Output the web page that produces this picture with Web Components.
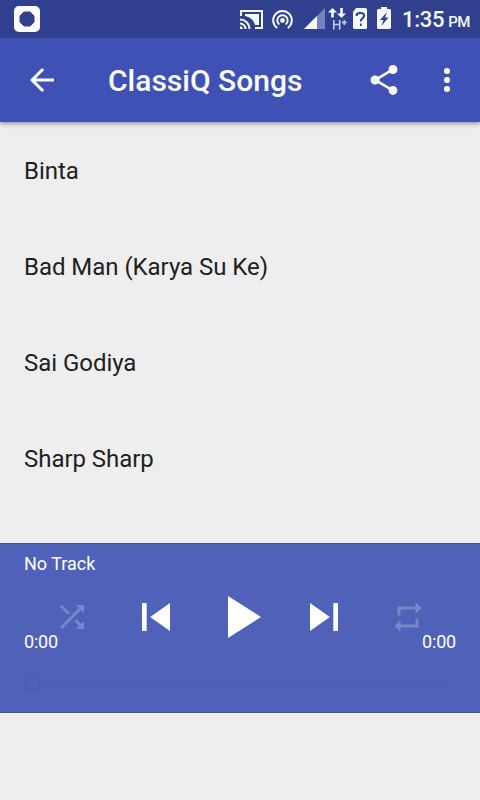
<!DOCTYPE html>
<html lang="en">
<head>
<meta charset="utf-8">
<title>ClassiQ Songs</title>
<style>
html,body{margin:0;height:100%}
body{width:480px;height:800px;overflow:hidden;background:#eee;font-family:Roboto,"Liberation Sans",sans-serif}
</style>
</head>
<body>
<music-app></music-app>
<script>
function define(name, html) {
  customElements.define(name, class extends HTMLElement {
    constructor() {
      super();
      this.attachShadow({mode: 'open'}).innerHTML = html;
    }
  });
}

define('status-bar', `
<style>
:host{position:relative;z-index:1;display:flex;align-items:center;box-sizing:border-box;height:38px;padding:0 0 0 14px;background:#30408f;color:#f4f8ff}
svg{display:block;flex:none}
.gap{width:200px}
.time{font-size:22px;line-height:36px;white-space:nowrap;margin-left:10px;padding-top:3px;font-weight:500;letter-spacing:-.3px}
small{font-size:15px;margin-left:4px;font-weight:500;letter-spacing:-.5px}
</style>
<svg width="26" height="26" viewBox="0 0 26 26"><rect width="26" height="26" rx="5" fill="#fff"/><path d="M10 6h6l4 4v6l-4 4h-6l-4-4v-6z" fill="#30408f" stroke="#30408f" stroke-linejoin="round"/></svg>
<span class="gap"></span>
<svg width="120" height="26" viewBox="240 6 120 26" fill="none" stroke="#f4f8ff" stroke-width="2">
  <path d="M241 16v-5h21v17h-7"/>
  <path d="M245 14h14v11h-4c-1-5-5-8-10-9z" fill="#f4f8ff" stroke="none"/>
  <path d="M240 19.5a9.500 9.500 0 0 1 9.500 9.500M240 23.500a5.500 5.500 0 0 1 5.500 5.500"/>
  <path d="M240 26.200a2.800 2.800 0 0 1 2.800 2.800h-2.800z" fill="#f4f8ff" stroke="none"/>
  <path d="M277.200 28a9.300 9.300 0 1 1 10.600 0M279.400 24.500a5.200 5.200 0 1 1 6.200 0"/>
  <circle cx="282.500" cy="20.500" r="2.400" fill="#f4f8ff" stroke="none"/>
  <path d="M325 8v21h-21z" fill="#7282c0" stroke="none"/>
  <path d="M317 16v13h-13z" fill="#f4f8ff" stroke="none"/>
  <path d="M332.500 17.500v-7M341.500 8v7" stroke-width="2.600"/>
  <path d="M328 12.500l4.500-4.500 4.500 4.500zM337 13.500l4.500 4.500 4.500-4.500z" fill="#f4f8ff" stroke="none"/>
  <path d="M333.800 20v9.500M339.700 20v9.500M333.800 24.500h5.900M341.800 22.500h5M344.300 20v5" stroke="#bdcbf4" stroke-width="1.600"/>
  <path d="M356 8h4v21h-5.500q-1.500 0-1.500-1.500V12z" fill="#f4f8ff" stroke="none"/>
  <path d="M356.500 16c0-2 1.500-3 3.500-3" stroke="#30408f"/>
</svg>
<svg width="32" height="26" viewBox="360 6 32 26" fill="#f4f8ff">
  <path d="M360 8h5.500q1.500 0 1.500 1.500v18q0 1.500-1.500 1.500H360z"/>
  <path d="M360 13c3-.3 4.500 1 4 3.200-.5 2-3.300 2.300-3.300 5.300" fill="none" stroke="#30408f" stroke-width="2"/>
  <path d="M360 23.500h1.700v2.500H360z" fill="#30408f"/>
  <path d="M381 7h6v2h2.500q1.500 0 1.500 1.500v17q0 1.500-1.500 1.500h-11q-1.500 0-1.500-1.500v-17Q377 9 378.500 9h2.500z"/>
  <path d="M387 12l-7 8h3.500l-2 6 7-8.500H385z" fill="#30408f"/>
</svg>
<span class="time">1:35<small>PM</small></span>`);

define('app-bar', `
<style>
:host{position:relative;display:flex;align-items:center;box-sizing:border-box;height:84px;padding:0 15px 0 24px;background:#3f51b5;box-shadow:0 1px 5px rgba(0,0,0,.5);color:#f8fcff}
svg{display:block;width:36px;height:36px;fill:currentColor}
h1{flex:1;margin:0 0 0 48px;padding-top:2px;font-size:30px;line-height:40px;font-weight:500;white-space:nowrap}
.more{margin-left:27px}
</style>
<svg viewBox="0 0 24 24"><path d="M20 11H7.830l5.590-5.590L12 4l-8 8 8 8 1.410-1.410L7.830 13H20v-2z"/></svg>
<h1><slot></slot></h1>
<svg viewBox="0 0 24 24"><path d="M18 16.080c-.76 0-1.440.3-1.960.77L8.910 12.700c.05-.23.09-.46.09-.7s-.04-.47-.09-.7l7.050-4.110c.54.5 1.250.81 2.040.81 1.660 0 3-1.340 3-3s-1.340-3-3-3-3 1.340-3 3c0 .24.04.47.09.7L8.040 9.810C7.500 9.310 6.790 9 6 9c-1.660 0-3 1.340-3 3s1.340 3 3 3c.79 0 1.500-.31 2.040-.81l7.120 4.160c-.05.21-.08.43-.08.65 0 1.610 1.310 2.920 2.920 2.920s2.920-1.310 2.920-2.920-1.310-2.920-2.920-2.920z"/></svg>
<svg class="more" viewBox="0 0 24 24"><circle cx="12" cy="6" r="2"/><circle cx="12" cy="12" r="2"/><circle cx="12" cy="18" r="2"/></svg>`);

define('song-item', `
<style>:host{display:flex;align-items:center;box-sizing:border-box;height:96px;padding:2px 24px 0;font-size:24px;line-height:32px;letter-spacing:-.04px;color:#212121}</style>
<slot></slot>`);

define('player-bar', `
<style>
:host{display:block;box-sizing:border-box;height:170px;padding:8px 24px 0;background:#4f61b8;border-top:1px solid #465592;border-bottom:1px solid #465592;color:#fff;font-size:18px;line-height:24px}
.controls{display:grid;grid-template-columns:repeat(5,84px);justify-content:center;place-items:center;height:72px;margin-top:5px}
svg{display:block;fill:currentColor}
.off{opacity:.23}
.times{display:flex;justify-content:space-between;margin-top:-23px;letter-spacing:-.2px}
.seek{display:flex;align-items:center;height:18px;margin-top:20px}
.knob{box-sizing:border-box;width:17px;height:17px;border:2px solid #4b5db4;border-radius:50%}
.line{width:407px;height:2px;background:#4c5eb5}
</style>
<div><slot></slot></div>
<div class="controls">
  <svg class="off" width="36" height="36" viewBox="0 0 24 24"><path d="M10.590 9.170L5.410 4 4 5.410l5.170 5.170 1.420-1.410zM14.500 4l2.040 2.040L4 18.590 5.410 20 17.960 7.460 20 9.500V4h-5.500zm.33 9.410l-1.410 1.410 3.130 3.130L14.500 20H20v-5.500l-2.040 2.040-3.130-3.130z"/></svg>
  <svg width="56" height="56" viewBox="0 0 24 24"><path d="M6 6h2v12H6zm3.500 6l8.500 6V6z"/></svg>
  <svg width="72" height="72" viewBox="0 0 24 24"><path d="M8 5v14l11-7z"/></svg>
  <svg width="56" height="56" viewBox="0 0 24 24"><path d="M6 18l8.500-6L6 6v12zM16 6v12h2V6h-2z"/></svg>
  <svg class="off" width="36" height="36" viewBox="0 0 24 24"><path d="M7 7h10v3l4-4-4-4v3H5v6h2V7zm10 10H7v-3l-4 4 4 4v-3h12v-6h-2v4z"/></svg>
</div>
<div class="times"><span>0:00</span><span>0:00</span></div>
<div class="seek"><span class="knob"></span><span class="line"></span></div>`);

define('music-app', `
<style>
:host{display:flex;flex-direction:column;width:480px;height:800px;background:#eee}
main{height:421px;overflow:hidden;flex:none}
status-bar,app-bar,player-bar{flex:none}
</style>
<status-bar></status-bar>
<app-bar>ClassiQ Songs</app-bar>
<main>
  <song-item>Binta</song-item>
  <song-item>Bad Man (Karya Su Ke)</song-item>
  <song-item>Sai Godiya</song-item>
  <song-item>Sharp Sharp</song-item>
</main>
<player-bar>No Track</player-bar>`);
</script>
</body>
</html>
